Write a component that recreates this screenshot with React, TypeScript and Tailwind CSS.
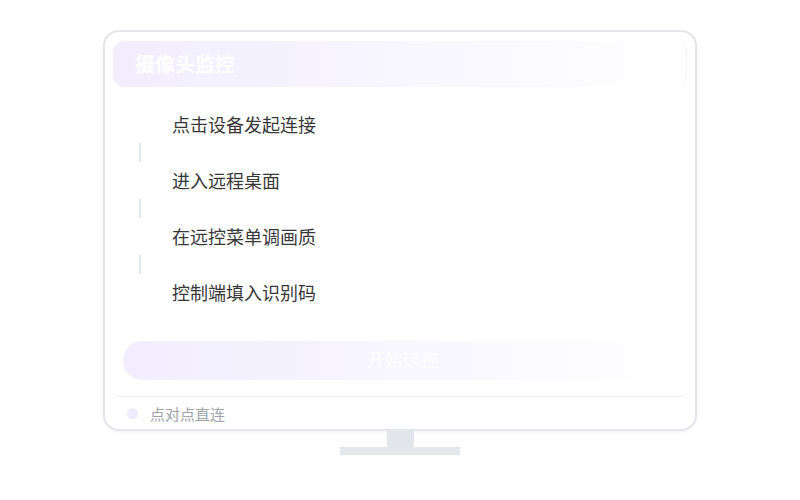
import React from "react";

const steps = ["点击设备发起连接", "进入远程桌面", "在远控菜单调画质", "控制端填入识别码"];

export default function App() {
  return (
    <div
      className="w-[800px] h-[500px] bg-white flex flex-col items-center pt-[30px]"
      style={{ fontFamily: '"Noto Sans CJK SC", "Noto Sans", sans-serif' }}
    >
      <div className="w-[594px] h-[401px] border-2 border-[#e4e6eb] rounded-[16px] bg-white flex flex-col shadow-[0_1px_3px_rgba(0,0,0,0.06)]">
        <div className="mx-[8px] mt-[9px] h-[46px] rounded-[12px] bg-gradient-to-r from-[#f1edff] via-[#f8f6ff] to-white flex items-center pl-[22px] border-r border-[#f0f1f4]">
          <span className="text-[20px] font-bold text-white leading-none">摄像头监控</span>
        </div>

        <div className="mt-[25px] ml-[24px] flex flex-col">
          {steps.map((s, i) => (
            <React.Fragment key={s}>
              <div className="flex items-center h-[24px]">
                <div className="w-[21px] flex justify-center">
                  <div className="w-[10px] h-[10px] rounded-full bg-white" />
                </div>
                <span className="ml-[22px] text-[18px] leading-[24px] text-[#383838]">{s}</span>
              </div>
              {i < steps.length - 1 && (
                <div className="h-[32px] w-[21px] flex items-center justify-center">
                  <div className="w-[2px] h-[19px] bg-[#e3e7ee]" />
                </div>
              )}
            </React.Fragment>
          ))}
        </div>

        <div className="mt-[37px] ml-[18px] mr-[12px] h-[39px] rounded-full bg-gradient-to-r from-[#f1edff] via-[#f8f6ff] to-white flex items-center justify-center">
          <span className="text-[18px] text-white leading-none -mt-[3px]">开始远控</span>
        </div>

        <div className="mt-[16px] mx-[10px] h-px bg-[#eceef2]" />

        <div className="h-[32px] flex items-center pl-[22px]">
          <div className="w-[11px] h-[11px] rounded-full bg-[#efebff]" />
          <span className="ml-[12px] text-[15px] leading-none text-[#9ea2a9]">点对点直连</span>
        </div>
      </div>
      <div className="w-[27px] h-[16px] bg-[#e2e5e9]" />
      <div className="w-[120px] h-[8px] bg-[#e4e7eb]" />
    </div>
  );
}
